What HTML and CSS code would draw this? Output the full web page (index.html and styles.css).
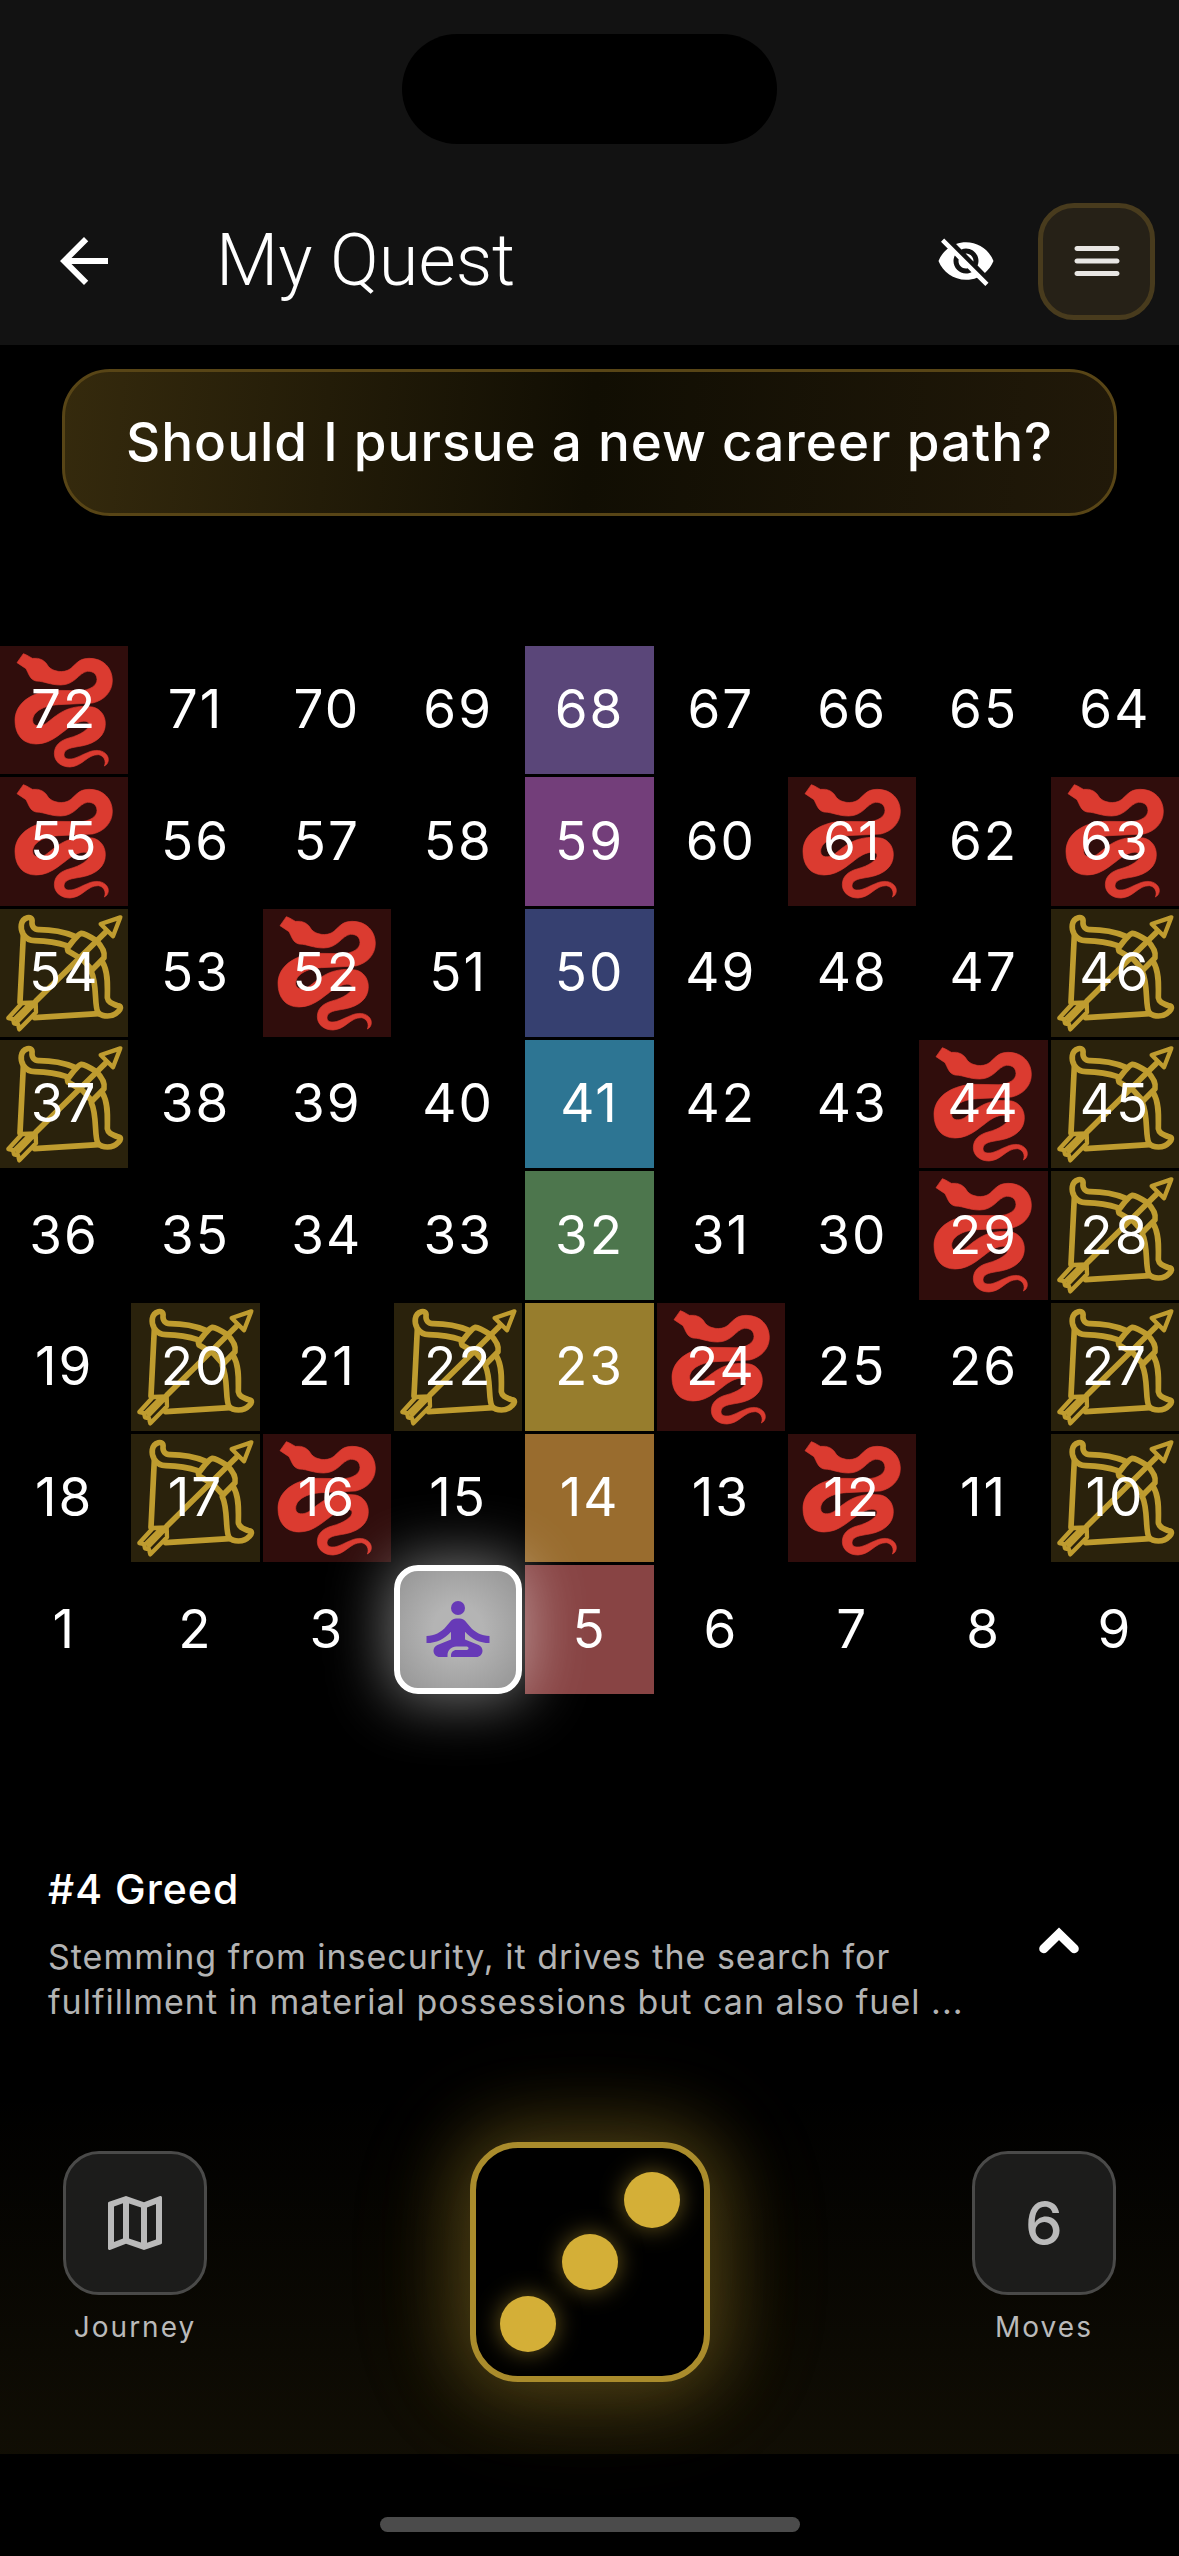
FILE: index.html
```
<!DOCTYPE html>
<html lang="en">
<head>
  <meta charset="UTF-8" />
  <meta name="viewport" content="width=device-width, initial-scale=1.0"/>
  <title>My Quest</title>
  <link rel="stylesheet" href="styles.css">
</head>
<body>

  <!-- Shared board icons -->
  <svg class="icon-defs" aria-hidden="true">
    <symbol id="snake" viewBox="0 17 385 385">
      <path stroke="currentColor" stroke-width="2" d="M51 67L70 40Q78 42 97 54Q130 50 145 78C155 92 190 102 213 84C232 66 240 54 268 54C312 54 337 85 337 120C337 155 312 180 278 188L175 193C130 195 98 215 98 240C98 262 125 258 137 250C170 226 200 190 278 200C300 205 316 224 316 250C316 285 290 308 245 317C215 322 195 324 192 341C191 350 197 357 210 356C225 356 242 345 262 337C285 326 310 328 321 345C328 355 326 371 313 377C320 362 311 345 295 343C262 342 248 378 210 380C185 380 163 365 163 340C163 315 180 300 210 292C240 284 270 266 267 250C262 238 242 242 225 250C190 268 160 311 108 311C70 311 45 285 45 240C45 192 90 155 160 150L240 151C270 150 291 135 291 118C291 104 282 92 262 93C235 98 225 134 182 134C150 134 135 123 108 122C90 118 86 100 78 85Z"/>
    </symbol>
    <symbol id="bow" viewBox="0 24 385 385">
      <g fill="none" stroke="currentColor" stroke-width="17" stroke-linejoin="round" stroke-linecap="round">
        <path d="M225 106C195 94 150 86 118 86C103 87 95 76 96 64C98 52 90 48 82 50C60 56 60 84 70 100C78 112 88 119 104 119C140 120 170 124 200 134"/>
        <path d="M288 118C272 108 256 98 244 97C238 98 230 104 202 142L204 150L248 176L276 207L312 170C316 150 300 130 288 118Z"/>
        <path d="M308 184C326 215 322 260 322 290C325 306 338 308 352 314C366 316 362 324 354 332C338 350 306 348 294 334C282 315 292 250 274 212"/>
        <path d="M70 102L60 303M104 350L296 338M108 300L318 92"/>
        <path stroke-width="13" d="M361 49L302 69L339 106Z"/>
        <path stroke-width="13" d="M66 306L107 304L108 334L58 385L54 370L42 367L39 354L25 351ZM98 314L54 360M86 312L46 352"/>
      </g>
    </symbol>
  </svg>

  <!-- Header -->
  <header class="header">
    <div class="status-bar"><div class="island"></div></div>
    <div class="app-bar">
      <button class="icon-btn" type="button" aria-label="Back">
        <svg class="icon-lg" viewBox="0 0 24 24"><path d="M20 11H7.83l5.59-5.59L12 4l-8 8 8 8 1.41-1.41L7.83 13H20v-2z"/></svg>
      </button>
      <h1>My Quest</h1>
      <button class="icon-btn" type="button" aria-label="Hide board">
        <svg class="icon-md" viewBox="0 0 24 24"><path d="M12 7c2.76 0 5 2.24 5 5 0 .65-.13 1.26-.36 1.83l2.92 2.92c1.51-1.26 2.7-2.89 3.43-4.75-1.73-4.39-6-7.5-11-7.5-1.4 0-2.74.25-3.98.7l2.16 2.16C10.74 7.13 11.35 7 12 7zM2 4.27l2.28 2.28.46.46C3.08 8.3 1.78 10.02 1 12c1.73 4.39 6 7.5 11 7.5 1.55 0 3.03-.3 4.38-.84l.42.42L19.73 22 21 20.73 3.27 3 2 4.27zM7.53 9.8l1.55 1.55c-.05.21-.08.43-.08.65 0 1.66 1.34 3 3 3 .22 0 .44-.03.65-.08l1.55 1.55c-.67.33-1.41.53-2.2.53-2.76 0-5-2.24-5-5 0-.79.2-1.53.53-2.2zm4.31-.78l3.15 3.15.02-.16c0-1.66-1.34-3-3-3l-.17.01z"/></svg>
      </button>
      <button class="menu-btn" type="button" aria-label="Menu">
        <svg class="icon-md" viewBox="0 0 24 24"><path d="M4 18h16c.55 0 1-.45 1-1s-.45-1-1-1H4c-.55 0-1 .45-1 1s.45 1 1 1zm0-5h16c.55 0 1-.45 1-1s-.45-1-1-1H4c-.55 0-1 .45-1 1s.45 1 1 1zM3 7c0 .55.45 1 1 1h16c.55 0 1-.45 1-1s-.45-1-1-1H4c-.55 0-1 .45-1 1z"/></svg>
      </button>
    </div>
  </header>

  <main>
    <div class="question">Should I pursue a new career path?</div>

    <!-- Board -->
    <div class="board">
      <div class="cell snake"><svg><use href="#snake"/></svg><span>72</span></div>
      <div class="cell">71</div>
      <div class="cell">70</div>
      <div class="cell">69</div>
      <div class="cell crown">68</div>
      <div class="cell">67</div>
      <div class="cell">66</div>
      <div class="cell">65</div>
      <div class="cell">64</div>

      <div class="cell snake"><svg><use href="#snake"/></svg><span>55</span></div>
      <div class="cell">56</div>
      <div class="cell">57</div>
      <div class="cell">58</div>
      <div class="cell brow">59</div>
      <div class="cell">60</div>
      <div class="cell snake"><svg><use href="#snake"/></svg><span>61</span></div>
      <div class="cell">62</div>
      <div class="cell snake"><svg><use href="#snake"/></svg><span>63</span></div>

      <div class="cell bow"><svg><use href="#bow"/></svg><span>54</span></div>
      <div class="cell">53</div>
      <div class="cell snake"><svg><use href="#snake"/></svg><span>52</span></div>
      <div class="cell">51</div>
      <div class="cell indigo">50</div>
      <div class="cell">49</div>
      <div class="cell">48</div>
      <div class="cell">47</div>
      <div class="cell bow"><svg><use href="#bow"/></svg><span>46</span></div>

      <div class="cell bow"><svg><use href="#bow"/></svg><span>37</span></div>
      <div class="cell">38</div>
      <div class="cell">39</div>
      <div class="cell">40</div>
      <div class="cell throat">41</div>
      <div class="cell">42</div>
      <div class="cell">43</div>
      <div class="cell snake"><svg><use href="#snake"/></svg><span>44</span></div>
      <div class="cell bow"><svg><use href="#bow"/></svg><span>45</span></div>

      <div class="cell">36</div>
      <div class="cell">35</div>
      <div class="cell">34</div>
      <div class="cell">33</div>
      <div class="cell heart">32</div>
      <div class="cell">31</div>
      <div class="cell">30</div>
      <div class="cell snake"><svg><use href="#snake"/></svg><span>29</span></div>
      <div class="cell bow"><svg><use href="#bow"/></svg><span>28</span></div>

      <div class="cell">19</div>
      <div class="cell bow"><svg><use href="#bow"/></svg><span>20</span></div>
      <div class="cell">21</div>
      <div class="cell bow"><svg><use href="#bow"/></svg><span>22</span></div>
      <div class="cell solar">23</div>
      <div class="cell snake"><svg><use href="#snake"/></svg><span>24</span></div>
      <div class="cell">25</div>
      <div class="cell">26</div>
      <div class="cell bow"><svg><use href="#bow"/></svg><span>27</span></div>

      <div class="cell">18</div>
      <div class="cell bow"><svg><use href="#bow"/></svg><span>17</span></div>
      <div class="cell snake"><svg><use href="#snake"/></svg><span>16</span></div>
      <div class="cell">15</div>
      <div class="cell sacral">14</div>
      <div class="cell">13</div>
      <div class="cell snake"><svg><use href="#snake"/></svg><span>12</span></div>
      <div class="cell">11</div>
      <div class="cell bow"><svg><use href="#bow"/></svg><span>10</span></div>

      <div class="cell">1</div>
      <div class="cell">2</div>
      <div class="cell">3</div>
      <div class="cell player">
        <svg viewBox="0 0 24 24"><circle cx="12" cy="6" r="2"/><path d="M21 16v-2c-2.24 0-4.16-.96-5.6-2.68l-1.34-1.6C13.68 9.26 13.12 9 12.53 9h-1.05c-.6 0-1.15.26-1.53.72l-1.34 1.6C7.16 13.04 5.24 14 3 14v2c2.77 0 5.19-1.17 7-3.25V15l-3.88 1.55C5.45 16.82 5 17.48 5 18.21 5 19.2 5.8 20 6.79 20H9v-.5c0-1.38 1.12-2.5 2.5-2.5h3c.28 0 .5.22.5.5s-.22.5-.5.5h-3c-.83 0-1.5.67-1.5 1.5v.5h7.21c.99 0 1.79-.8 1.79-1.79 0-.73-.45-1.39-1.12-1.66L14 15v-2.25c1.81 2.08 4.23 3.25 7 3.25z"/></svg>
      </div>
      <div class="cell root">5</div>
      <div class="cell">6</div>
      <div class="cell">7</div>
      <div class="cell">8</div>
      <div class="cell">9</div>
    </div>

    <!-- Current cell info -->
    <section class="info">
      <div class="info-text">
        <h2>#4 Greed</h2>
        <p>Stemming from insecurity, it drives the search for fulfillment in material possessions but can also fuel ...</p>
      </div>
      <button class="icon-btn" type="button" aria-label="Show more">
        <svg class="chevron" viewBox="0 0 24 24"><path d="M6.9 13.9L12 8.9l5.1 5"/></svg>
      </button>
    </section>
  </main>

  <!-- Bottom controls -->
  <div class="controls">
    <div class="control">
      <button class="tile" type="button" id="journey" aria-labelledby="journey-label">
        <svg class="icon-lg" viewBox="0 0 24 24"><path d="M20.5 3l-.16.03L15 5.1 9 3 3.36 4.9c-.21.07-.36.25-.36.48V20.5c0 .28.22.5.5.5l.16-.03L9 18.9l6 2.1 5.64-1.9c.21-.07.36-.25.36-.48V3.5c0-.28-.22-.5-.5-.5zM10 5.47l4 1.4v11.66l-4-1.4V5.47zm-5 .99l3-1.01v11.7l-3 1.16V6.46zm14 11.08l-3 1.01V6.86l3-1.16v11.84z"/></svg>
      </button>
      <label for="journey" id="journey-label">Journey</label>
    </div>
    <button class="dice" type="button" aria-label="Roll the dice">
      <i class="dot top"></i>
      <i class="dot middle"></i>
      <i class="dot bottom"></i>
    </button>
    <div class="control">
      <button class="tile" type="button" id="moves">6</button>
      <label for="moves">Moves</label>
    </div>
  </div>

  <footer class="home-area"><div class="home-bar"></div></footer>

</body>
</html>
```
FILE: styles.css
```
* {
  box-sizing: border-box;
}

body {
  margin: 0;
  min-height: 100vh;
  display: flex;
  flex-direction: column;
  background-color: #000;
  color: #fff;
  font-family: Inter, sans-serif;
}

button {
  padding: 0;
  border: none;
  background: none;
  color: inherit;
  font-family: inherit;
  cursor: pointer;
}

svg {
  display: block;
  fill: currentColor;
}

h1, h2, p {
  margin: 0;
}

.icon-defs {
  position: absolute;
  width: 0;
  height: 0;
}

.icon-lg {
  width: 72px;
  height: 72px;
}

.icon-md {
  width: 60px;
  height: 60px;
}

/* Header */
.header {
  background-color: #121212;
}

.status-bar {
  height: 177px;
  padding-top: 34px;
}

.island {
  width: 375px;
  height: 110px;
  margin: 0 auto;
  border-radius: 55px;
  background-color: #000;
}

.app-bar {
  display: flex;
  align-items: center;
  height: 168px;
  padding: 0 24px 0 48px;
}

.app-bar h1 {
  flex: 1;
  margin-left: 96px;
  font-family: Roboto, sans-serif;
  font-size: 72px;
  font-weight: 300;
  line-height: 84px;
}

.menu-btn {
  display: flex;
  align-items: center;
  justify-content: center;
  width: 117px;
  height: 117px;
  margin-left: 42px;
  border: 5px solid #483b1d;
  border-radius: 36px;
  background-color: #262117;
  color: #e8e6e3;
}

/* Question */
main {
  flex: 1;
}

.question {
  margin: 24px 62px 0;
  padding: 42px 24px;
  border: 3px solid #584516;
  border-radius: 48px;
  background: linear-gradient(95deg, #352a0d, #110e03 50%, #211909);
  font-size: 53px;
  font-weight: 500;
  line-height: 57px;
  letter-spacing: 1px;
  text-align: center;
}

/* Board */
.board {
  display: grid;
  grid-template-columns: repeat(9, 1fr);
  gap: 3px;
  margin-top: 130px;
}

.cell {
  position: relative;
  display: flex;
  align-items: center;
  justify-content: center;
  aspect-ratio: 1;
  padding-bottom: 2px;
  font-size: 53px;
  font-weight: 400;
  letter-spacing: 2px;
}

.cell span {
  position: relative;
}

.snake svg,
.bow svg {
  position: absolute;
  top: 0;
  left: 0;
  width: 100%;
  height: 100%;
}

.snake {
  background-color: #300d0c;
}

.snake svg {
  color: #db3b30;
}

.bow {
  background-color: #2a220c;
}

.bow svg {
  color: #bf9c2f;
}

.crown { background-color: #5a4679; }
.brow { background-color: #733e7a; }
.indigo { background-color: #364070; }
.throat { background-color: #2d7593; }
.heart { background-color: #4d764d; }
.solar { background-color: #977d2d; }
.sacral { background-color: #996c2e; }
.root { background-color: #884444; }

.player {
  z-index: 1;
  border: 6px solid #fff;
  border-radius: 24px;
  background: radial-gradient(circle, #b4b4b4 30%, #959595 100%);
  box-shadow: 0 0 60px 6px rgba(255, 255, 255, 0.45);
  color: #673ab7;
}

.player svg {
  width: 84px;
  height: 84px;
}

/* Info */
.info {
  display: flex;
  align-items: center;
  justify-content: space-between;
  margin-top: 168px;
  padding: 0 84px 70px 48px;
}

.info-text {
  max-width: 960px;
}

.info h2 {
  margin-bottom: 18px;
  font-size: 41px;
  font-weight: 500;
  line-height: 54px;
  letter-spacing: 1px;
}

.info p {
  color: #b3b3b3;
  font-size: 34px;
  line-height: 45px;
  letter-spacing: 1px;
}

.chevron {
  width: 72px;
  height: 72px;
  fill: none;
  stroke: currentColor;
  stroke-width: 3;
  stroke-linecap: round;
}

/* Bottom controls */
.controls {
  display: flex;
  align-items: flex-start;
  justify-content: space-between;
  padding: 48px 63px 72px;
  background: linear-gradient(rgba(212, 175, 55, 0), rgba(212, 175, 55, 0.08));
}

.control {
  display: flex;
  flex-direction: column;
  align-items: center;
  gap: 14px;
  width: 144px;
  padding-top: 9px;
  color: #bababa;
}

.control label {
  font-size: 28px;
  line-height: 36px;
  letter-spacing: 2px;
}

.tile {
  display: flex;
  align-items: center;
  justify-content: center;
  width: 144px;
  height: 144px;
  border: 3px solid #4a4a49;
  border-radius: 36px;
  background-color: #1c1c1b;
  font-size: 60px;
  font-weight: 500;
}

.dice {
  display: grid;
  grid-template-columns: repeat(3, 56px);
  grid-template-rows: repeat(3, 56px);
  gap: 6px;
  place-content: center;
  width: 240px;
  height: 240px;
  border: 6px solid #aa8c2c;
  border-radius: 48px;
  background-color: #000;
  box-shadow: 0 0 72px 12px rgba(212, 175, 55, 0.32), 0 0 120px 24px rgba(212, 175, 55, 0.08);
}

.dot {
  border-radius: 50%;
  background-color: #d4af37;
  box-shadow: 0 0 24px rgba(212, 175, 55, 0.5);
}

.dot.top { grid-area: 1 / 3; }
.dot.middle { grid-area: 2 / 2; }
.dot.bottom { grid-area: 3 / 1; }

/* Home indicator */
.home-area {
  height: 102px;
  padding-top: 63px;
}

.home-bar {
  width: 420px;
  height: 15px;
  margin: 0 auto;
  border-radius: 8px;
  background-color: #4b4b4b;
}
```
